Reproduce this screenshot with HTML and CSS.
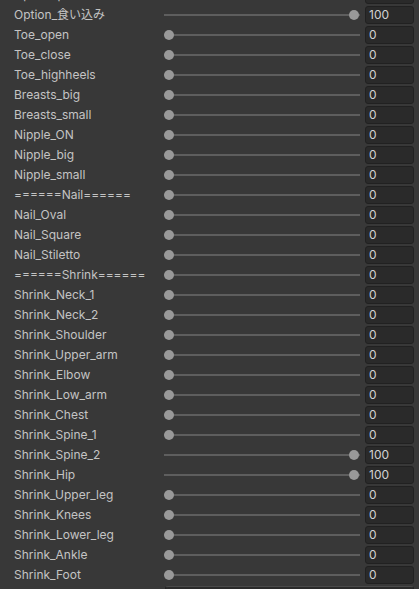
FILE: index.html
```html
<!DOCTYPE html>
<html>
<head>
<meta charset="utf-8">
<link rel="stylesheet" href="styles.css">
</head>
<body>
<div class="list">
  <div class="row"><span class="label">Option_p</span><div class="slider"><div class="track"></div><div class="thumb" style="--v:0"></div></div><div class="field">0</div></div>
  <div class="row"><span class="label">Option_食い込み</span><div class="slider"><div class="track"></div><div class="thumb" style="--v:100"></div></div><div class="field">100</div></div>
  <div class="row"><span class="label">Toe_open</span><div class="slider"><div class="track"></div><div class="thumb" style="--v:0"></div></div><div class="field">0</div></div>
  <div class="row"><span class="label">Toe_close</span><div class="slider"><div class="track"></div><div class="thumb" style="--v:0"></div></div><div class="field">0</div></div>
  <div class="row"><span class="label">Toe_highheels</span><div class="slider"><div class="track"></div><div class="thumb" style="--v:0"></div></div><div class="field">0</div></div>
  <div class="row"><span class="label">Breasts_big</span><div class="slider"><div class="track"></div><div class="thumb" style="--v:0"></div></div><div class="field">0</div></div>
  <div class="row"><span class="label">Breasts_small</span><div class="slider"><div class="track"></div><div class="thumb" style="--v:0"></div></div><div class="field">0</div></div>
  <div class="row"><span class="label">Nipple_ON</span><div class="slider"><div class="track"></div><div class="thumb" style="--v:0"></div></div><div class="field">0</div></div>
  <div class="row"><span class="label">Nipple_big</span><div class="slider"><div class="track"></div><div class="thumb" style="--v:0"></div></div><div class="field">0</div></div>
  <div class="row"><span class="label">Nipple_small</span><div class="slider"><div class="track"></div><div class="thumb" style="--v:0"></div></div><div class="field">0</div></div>
  <div class="row"><span class="label">======Nail======</span><div class="slider"><div class="track"></div><div class="thumb" style="--v:0"></div></div><div class="field">0</div></div>
  <div class="row"><span class="label">Nail_Oval</span><div class="slider"><div class="track"></div><div class="thumb" style="--v:0"></div></div><div class="field">0</div></div>
  <div class="row"><span class="label">Nail_Square</span><div class="slider"><div class="track"></div><div class="thumb" style="--v:0"></div></div><div class="field">0</div></div>
  <div class="row"><span class="label">Nail_Stiletto</span><div class="slider"><div class="track"></div><div class="thumb" style="--v:0"></div></div><div class="field">0</div></div>
  <div class="row"><span class="label">======Shrink======</span><div class="slider"><div class="track"></div><div class="thumb" style="--v:0"></div></div><div class="field">0</div></div>
  <div class="row"><span class="label">Shrink_Neck_1</span><div class="slider"><div class="track"></div><div class="thumb" style="--v:0"></div></div><div class="field">0</div></div>
  <div class="row"><span class="label">Shrink_Neck_2</span><div class="slider"><div class="track"></div><div class="thumb" style="--v:0"></div></div><div class="field">0</div></div>
  <div class="row"><span class="label">Shrink_Shoulder</span><div class="slider"><div class="track"></div><div class="thumb" style="--v:0"></div></div><div class="field">0</div></div>
  <div class="row"><span class="label">Shrink_Upper_arm</span><div class="slider"><div class="track"></div><div class="thumb" style="--v:0"></div></div><div class="field">0</div></div>
  <div class="row"><span class="label">Shrink_Elbow</span><div class="slider"><div class="track"></div><div class="thumb" style="--v:0"></div></div><div class="field">0</div></div>
  <div class="row"><span class="label">Shrink_Low_arm</span><div class="slider"><div class="track"></div><div class="thumb" style="--v:0"></div></div><div class="field">0</div></div>
  <div class="row"><span class="label">Shrink_Chest</span><div class="slider"><div class="track"></div><div class="thumb" style="--v:0"></div></div><div class="field">0</div></div>
  <div class="row"><span class="label">Shrink_Spine_1</span><div class="slider"><div class="track"></div><div class="thumb" style="--v:0"></div></div><div class="field">0</div></div>
  <div class="row"><span class="label">Shrink_Spine_2</span><div class="slider"><div class="track"></div><div class="thumb" style="--v:100"></div></div><div class="field">100</div></div>
  <div class="row"><span class="label">Shrink_Hip</span><div class="slider"><div class="track"></div><div class="thumb" style="--v:100"></div></div><div class="field">100</div></div>
  <div class="row"><span class="label">Shrink_Upper_leg</span><div class="slider"><div class="track"></div><div class="thumb" style="--v:0"></div></div><div class="field">0</div></div>
  <div class="row"><span class="label">Shrink_Knees</span><div class="slider"><div class="track"></div><div class="thumb" style="--v:0"></div></div><div class="field">0</div></div>
  <div class="row"><span class="label">Shrink_Lower_leg</span><div class="slider"><div class="track"></div><div class="thumb" style="--v:0"></div></div><div class="field">0</div></div>
  <div class="row"><span class="label">Shrink_Ankle</span><div class="slider"><div class="track"></div><div class="thumb" style="--v:0"></div></div><div class="field">0</div></div>
  <div class="row"><span class="label">Shrink_Foot</span><div class="slider"><div class="track"></div><div class="thumb" style="--v:0"></div></div><div class="field">0</div></div>
  <div class="row"><span class="label"></span><div class="objfield"></div></div>
</div>
</body>
</html>
```

FILE: styles.css
```css
html, body {
  margin: 0;
  padding: 0;
  background: #383838;
  overflow: hidden;
}
body {
  width: 419px;
  height: 589px;
  font-family: Inter, "Noto Sans CJK JP", sans-serif;
  font-size: 12px;
  color: #c4c4c4;
}
.list {
  margin-top: -15px;
  display: flex;
  flex-direction: column;
}
.row {
  display: flex;
  align-items: center;
  height: 20px;
  padding-left: 14px;
  padding-right: 5px;
}
.label {
  width: 150px;
  flex: none;
  white-space: nowrap;
  overflow: hidden;
  line-height: 20px;
}
.slider {
  position: relative;
  flex: 1;
  height: 20px;
  margin-right: 5px;
}
.track {
  position: absolute;
  left: 0;
  right: 0;
  top: 9px;
  height: 2px;
  background: #5e5e5e;
}
.thumb {
  position: absolute;
  top: 5px;
  left: calc(var(--v) * 1.85px);
  width: 10px;
  height: 10px;
  border-radius: 50%;
  background: #999999;
}
.field {
  flex: none;
  box-sizing: border-box;
  width: 49px;
  height: 18px;
  background: #2a2a2a;
  border: 1px solid #212121;
  border-radius: 3px;
  color: #d2d2d2;
  padding-left: 3px;
  line-height: 16px;
}
.objfield {
  flex: none;
  box-sizing: border-box;
  margin-left: 1px;
  width: 249px;
  height: 18px;
  background: #2a2a2a;
  border: 1px solid #212121;
  border-top-color: #4a4a4a;
  border-radius: 3px;
}
```
